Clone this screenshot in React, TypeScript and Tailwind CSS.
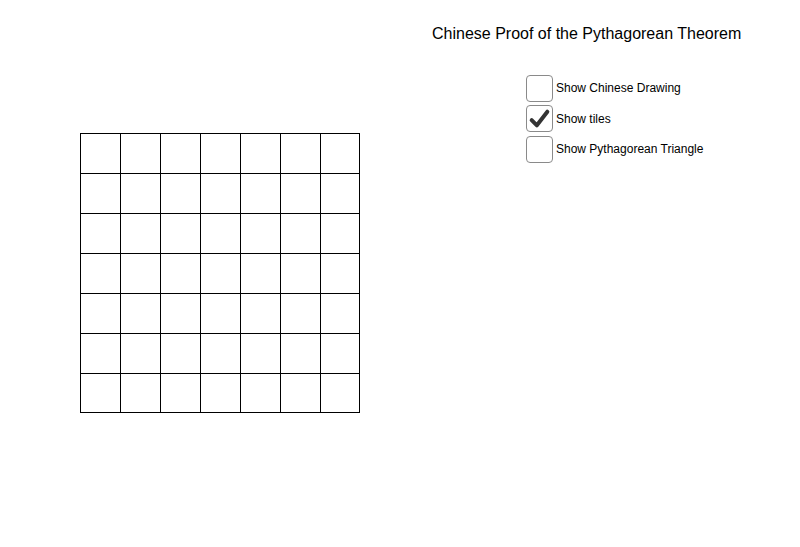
import { useState } from 'react'

const CELLS = Array.from({ length: 49 }, (_, i) => i)

const OPTIONS = [
  { key: 'chinese', label: 'Show Chinese Drawing' },
  { key: 'tiles', label: 'Show tiles' },
  { key: 'triangle', label: 'Show Pythagorean Triangle' },
]

function CheckRow({ label, checked, onToggle }: { label: string; checked: boolean; onToggle: () => void }) {
  return (
    <button onClick={onToggle} className="flex items-center gap-[3px] h-[30.5px] text-left">
      <span className="w-[27px] h-[27px] rounded-[4px] border border-[#8a8a8a] bg-white flex items-center justify-center shrink-0">
        {checked && (
          <svg width="23" height="23" viewBox="0 0 22 22">
            <path d="M3.5 12.5 L8.5 17.5 L18.5 4.5" fill="none" stroke="#333" strokeWidth="3.8" strokeLinecap="round" strokeLinejoin="round" />
          </svg>
        )}
      </span>
      <span className="text-[12px] text-black">{label}</span>
    </button>
  )
}

export default function App() {
  const [state, setState] = useState<Record<string, boolean>>({ chinese: false, tiles: true, triangle: false })

  return (
    <div className="w-[800px] h-[547px] bg-white flex overflow-hidden" style={{ fontFamily: '"Liberation Sans", Arial, sans-serif' }}>
      {/* tiles */}
      <div className="pl-[80px] pt-[133px] shrink-0">
        {state.tiles && (
          <div className="grid grid-cols-[repeat(6,40px)_39px] border-l border-t border-black">
            {CELLS.map((i) => (
              <div key={i} className={`${i >= 42 ? 'h-[39px]' : 'h-[40px]'} border-r border-b border-black`} />
            ))}
          </div>
        )}
      </div>

      {/* controls */}
      <div className="ml-[72px] pt-[24px] flex flex-col">
        <div className="text-[16px] text-black leading-[20px]">Chinese Proof of the Pythagorean Theorem</div>
        <div className="ml-[94px] mt-[29px] flex flex-col">
          {OPTIONS.map((o) => (
            <CheckRow
              key={o.key}
              label={o.label}
              checked={state[o.key]}
              onToggle={() => setState((s) => ({ ...s, [o.key]: !s[o.key] }))}
            />
          ))}
        </div>
      </div>
    </div>
  )
}
